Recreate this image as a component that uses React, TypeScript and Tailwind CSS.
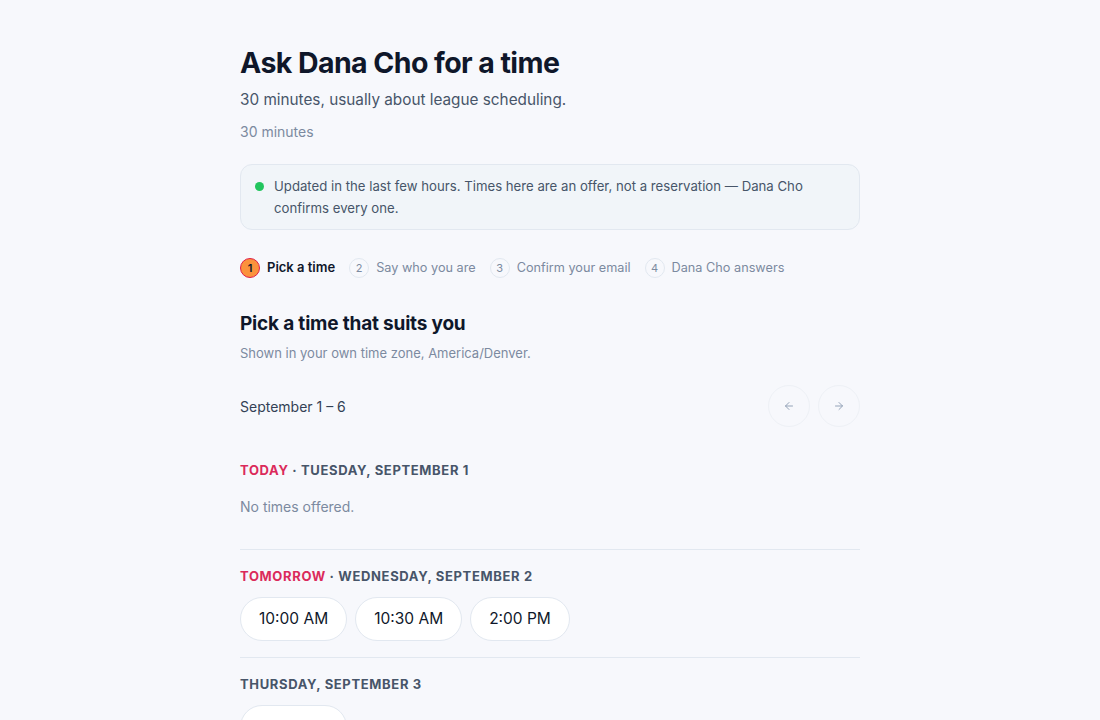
import React from "react";

const steps = ["Pick a time", "Say who you are", "Confirm your email", "Dana Cho answers"];

function Pill({ t }: { t: string }) {
  return (
    <button className="h-[44px] px-[18px] rounded-full bg-white border border-[#e2e8f0] text-[15.5px] text-[#0f172a]">
      {t}
    </button>
  );
}

export default function App() {
  return (
    <div
      className="min-h-[720px] w-full bg-[#f7f8fc] text-[#0f172a]"
      style={{ fontFamily: 'Inter, "Noto Sans", sans-serif' }}
    >
      <div className="mx-auto w-[620px] pt-[43px]">
        <h1 className="text-[28.5px] leading-[40px] font-bold tracking-[-0.02em] text-[#0f172a]">
          Ask Dana Cho for a time
        </h1>
        <p className="mt-[5px] text-[15.3px] leading-[24px] text-[#475569]">
          30 minutes, usually about league scheduling.
        </p>
        <p className="mt-[10px] text-[14px] leading-[20px] text-[#7c8aa0]">30 minutes</p>

        <div className="mt-[22px] flex rounded-[12px] border border-[#e2e8f0] bg-[#f1f5f9] px-[14px] py-[10px]">
          <span className="mt-[7px] h-[9px] w-[9px] shrink-0 rounded-full bg-[#22c55e]" />
          <p className="ml-[10px] text-[13.2px] leading-[22px] text-[#475569]">
            Updated in the last few hours. Times here are an offer, not a reservation — Dana Cho confirms every one.
          </p>
        </div>

        <div className="mt-[27px] flex items-center gap-[14px] h-[22px]">
          {steps.map((s, i) => (
            <div key={s} className="flex items-center gap-[7px]">
              <span
                className={
                  i === 0
                    ? "flex h-[20px] w-[20px] items-center justify-center rounded-full bg-[#fb923c] border border-[#e11d48] text-[11px] font-semibold text-[#0f172a]"
                    : "flex h-[20px] w-[20px] items-center justify-center rounded-full border border-[#e2e8f0] text-[11px] text-[#7c8aa0]"
                }
              >
                {i + 1}
              </span>
              <span
                className={
                  i === 0
                    ? "text-[13px] font-semibold text-[#0f172a]"
                    : "text-[12.7px] text-[#7c8aa0]"
                }
              >
                {s}
              </span>
            </div>
          ))}
        </div>

        <h2 className="mt-[31px] text-[19px] leading-[28px] font-bold tracking-[-0.01em] text-[#0f172a]">
          Pick a time that suits you
        </h2>
        <p className="mt-[6px] text-[13px] leading-[18px] text-[#7c8aa0]">
          Shown in your own time zone, America/Denver.
        </p>

        <div className="mt-[23px] flex items-center justify-between">
          <span className="text-[14px] text-[#334155]">September 1 – 6</span>
          <div className="flex gap-[8px]">
            <button className="flex h-[42px] w-[42px] items-center justify-center rounded-full border border-[#eef1f6] text-[#94a3b8]">
              <svg width="12" height="12" viewBox="0 0 24 24" fill="none" stroke="currentColor" strokeWidth="2" strokeLinecap="round" strokeLinejoin="round">
                <path d="M19 12H5M12 19l-7-7 7-7" />
              </svg>
            </button>
            <button className="flex h-[42px] w-[42px] items-center justify-center rounded-full border border-[#eef1f6] text-[#94a3b8]">
              <svg width="12" height="12" viewBox="0 0 24 24" fill="none" stroke="currentColor" strokeWidth="2" strokeLinecap="round" strokeLinejoin="round">
                <path d="M5 12h14M12 5l7 7-7 7" />
              </svg>
            </button>
          </div>
        </div>

        <div className="mt-[34px] border-b border-[#e2e8f0] pb-[31px]">
          <div className="text-[13px] leading-[18px] font-bold tracking-[0.05em] uppercase text-[#475569]">
            <span className="text-[#db2a5b]">Today</span> · Tuesday, September 1
          </div>
          <p className="mt-[17px] text-[14px] leading-[22px] text-[#7c8aa0]">No times offered.</p>
        </div>

        <div className="border-b border-[#e2e8f0] pt-[17px] pb-[16px]">
          <div className="text-[13px] leading-[18px] font-bold tracking-[0.05em] uppercase text-[#475569]">
            <span className="text-[#db2a5b]">Tomorrow</span> · Wednesday, September 2
          </div>
          <div className="mt-[12px] flex gap-[8px]">
            <Pill t="10:00 AM" />
            <Pill t="10:30 AM" />
            <Pill t="2:00 PM" />
          </div>
        </div>

        <div className="pt-[17px] pb-[16px]">
          <div className="text-[13px] leading-[18px] font-bold tracking-[0.05em] uppercase text-[#475569]">
            Thursday, September 3
          </div>
          <div className="mt-[12px] flex gap-[8px]">
            <Pill t="10:00 AM" />
          </div>
        </div>
      </div>
    </div>
  );
}
